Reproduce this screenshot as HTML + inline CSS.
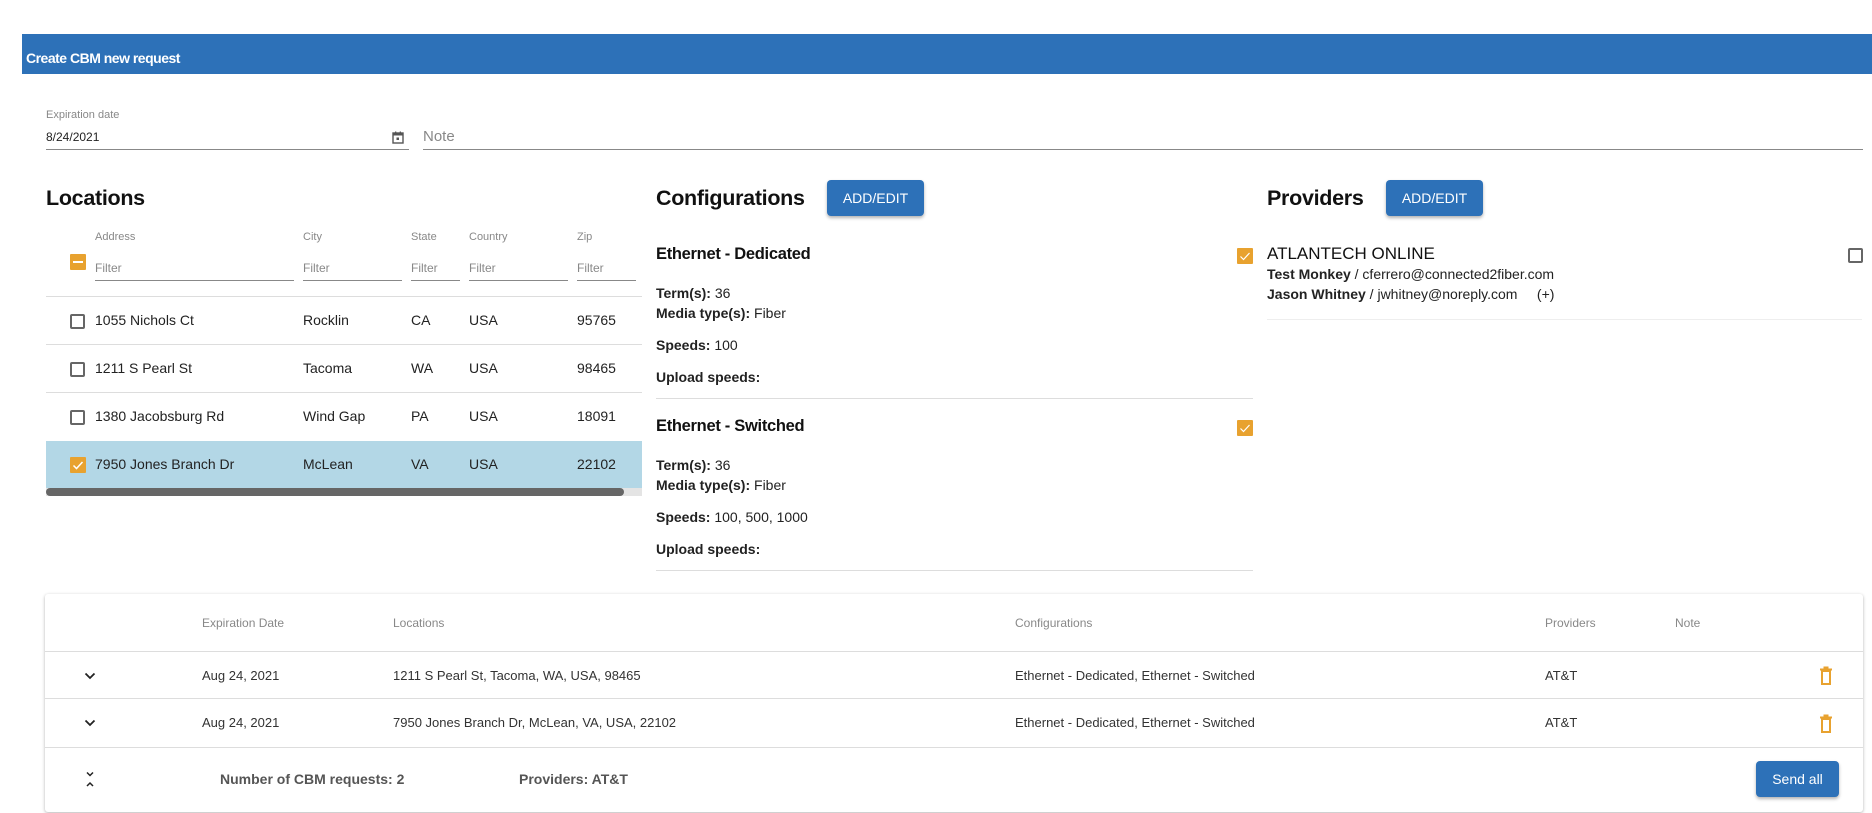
<!DOCTYPE html>
<html><head><meta charset="utf-8"><style>
*{box-sizing:border-box;margin:0;padding:0}
body{width:1872px;height:813px;background:#fff;font-family:"Liberation Sans",Arial,sans-serif;color:#222;position:relative;overflow:hidden}
.a{position:absolute;white-space:nowrap}
.hdr{left:22px;top:34px;width:1850px;height:40px;background:#2d71b8}
.cb{position:absolute;width:15px;height:15px;border:2px solid #666;border-radius:2px;background:#fff}
.cbo{position:absolute;width:16px;height:16px;background:#e8a22f;border-radius:1px}
.btn{position:absolute;background:#2d71b8;color:#fff;border-radius:4px;font-size:14px;display:flex;align-items:center;justify-content:center;box-shadow:0 2px 3px rgba(0,0,0,.3)}
.line{position:absolute;height:1px;background:#ddd}
.ul{position:absolute;height:1px;background:#888}
.gh{font-size:11px;color:#888}
.t14{font-size:14px;color:#222}
.h2{font-size:21.5px;font-weight:bold;color:#111;letter-spacing:-0.3px}
.ch{font-size:16.5px;font-weight:bold;color:#111;letter-spacing:-0.3px}
.ci{font-size:14px;color:#222}
.ci b{font-weight:bold}
.bt{font-size:13px;color:#333}
.bh{font-size:12px;color:#888}
</style></head><body>
<div class="a hdr"></div>
<div class="a" style="left:26px;top:50px;color:#fff;font-size:14px;font-weight:bold;letter-spacing:-0.5px">Create CBM new request</div>

<div class="a gh" style="left:46px;top:109px">Expiration date</div>
<div class="a" style="left:46px;top:130px;font-size:12px;color:#222">8/24/2021</div>
<svg class="a" style="left:392px;top:131px" width="12" height="13" viewBox="0 0 12 13"><rect x="1" y="2" width="10" height="10" fill="none" stroke="#555" stroke-width="1.4"/><rect x="1" y="2" width="10" height="2.5" fill="#555"/><rect x="3" y="0.5" width="1.3" height="2.5" fill="#555"/><rect x="7.7" y="0.5" width="1.3" height="2.5" fill="#555"/><rect x="4.5" y="6.5" width="2.5" height="2.5" fill="#555"/></svg>
<div class="ul" style="left:46px;top:149px;width:363px"></div>
<div class="a" style="left:423px;top:128px;font-size:15px;color:#888">Note</div>
<div class="ul" style="left:423px;top:149px;width:1440px"></div>

<div class="a h2" style="left:46px;top:186px">Locations</div>
<div class="a gh" style="left:95px;top:231px">Address</div>
<div class="a gh" style="left:303px;top:231px">City</div>
<div class="a gh" style="left:411px;top:231px">State</div>
<div class="a gh" style="left:469px;top:231px">Country</div>
<div class="a gh" style="left:577px;top:231px">Zip</div>
<div class="cbo" style="left:70px;top:254px"><div style="position:absolute;left:3px;top:7px;width:10px;height:2px;background:#fff"></div></div>
<div class="a" style="left:95px;top:261px;font-size:12px;color:#888">Filter</div>
<div class="a" style="left:303px;top:261px;font-size:12px;color:#888">Filter</div>
<div class="a" style="left:411px;top:261px;font-size:12px;color:#888">Filter</div>
<div class="a" style="left:469px;top:261px;font-size:12px;color:#888">Filter</div>
<div class="a" style="left:577px;top:261px;font-size:12px;color:#888">Filter</div>
<div class="ul" style="left:95px;top:280px;width:199px"></div>
<div class="ul" style="left:303px;top:280px;width:99px"></div>
<div class="ul" style="left:411px;top:280px;width:49px"></div>
<div class="ul" style="left:469px;top:280px;width:99px"></div>
<div class="ul" style="left:577px;top:280px;width:59px"></div>

<div class="line" style="left:46px;top:296px;width:596px"></div>
<div class="cb" style="left:70px;top:314px"></div>
<div class="a t14" style="left:95px;top:312px">1055 Nichols Ct</div><div class="a t14" style="left:303px;top:312px">Rocklin</div><div class="a t14" style="left:411px;top:312px">CA</div><div class="a t14" style="left:469px;top:312px">USA</div><div class="a t14" style="left:577px;top:312px">95765</div>
<div class="line" style="left:46px;top:344px;width:596px"></div>
<div class="cb" style="left:70px;top:362px"></div>
<div class="a t14" style="left:95px;top:360px">1211 S Pearl St</div><div class="a t14" style="left:303px;top:360px">Tacoma</div><div class="a t14" style="left:411px;top:360px">WA</div><div class="a t14" style="left:469px;top:360px">USA</div><div class="a t14" style="left:577px;top:360px">98465</div>
<div class="line" style="left:46px;top:392px;width:596px"></div>
<div class="cb" style="left:70px;top:410px"></div>
<div class="a t14" style="left:95px;top:408px">1380 Jacobsburg Rd</div><div class="a t14" style="left:303px;top:408px">Wind Gap</div><div class="a t14" style="left:411px;top:408px">PA</div><div class="a t14" style="left:469px;top:408px">USA</div><div class="a t14" style="left:577px;top:408px">18091</div>
<div class="a" style="left:46px;top:441px;width:596px;height:47px;background:#b3d7e6"></div>
<div class="cbo" style="left:70px;top:457px"><svg width="16" height="16"><path d="M3.5 8.5l3 3 6-6.5" fill="none" stroke="#fff" stroke-width="1.5"/></svg></div>
<div class="a t14" style="left:95px;top:456px">7950 Jones Branch Dr</div><div class="a t14" style="left:303px;top:456px">McLean</div><div class="a t14" style="left:411px;top:456px">VA</div><div class="a t14" style="left:469px;top:456px">USA</div><div class="a t14" style="left:577px;top:456px">22102</div>
<div class="a" style="left:46px;top:488px;width:596px;height:8px;background:#e4e4e4"></div>
<div class="a" style="left:46px;top:488px;width:578px;height:8px;background:#666;border-radius:4px"></div>

<div class="a h2" style="left:656px;top:186px">Configurations</div>
<div class="btn" style="left:827px;top:180px;width:97px;height:36px">ADD/EDIT</div>
<div class="a ch" style="left:656px;top:245px">Ethernet - Dedicated</div>
<div class="cbo" style="left:1237px;top:248px"><svg width="16" height="16"><path d="M3.5 8.5l3 3 6-6.5" fill="none" stroke="#fff" stroke-width="1.2"/></svg></div>
<div class="a ci" style="left:656px;top:285px"><b>Term(s):</b> 36</div>
<div class="a ci" style="left:656px;top:305px"><b>Media type(s):</b> Fiber</div>
<div class="a ci" style="left:656px;top:337px"><b>Speeds:</b> 100</div>
<div class="a ci" style="left:656px;top:369px"><b>Upload speeds:</b></div>
<div class="line" style="left:656px;top:398px;width:597px"></div>
<div class="a ch" style="left:656px;top:417px">Ethernet - Switched</div>
<div class="cbo" style="left:1237px;top:420px"><svg width="16" height="16"><path d="M3.5 8.5l3 3 6-6.5" fill="none" stroke="#fff" stroke-width="1.2"/></svg></div>
<div class="a ci" style="left:656px;top:457px"><b>Term(s):</b> 36</div>
<div class="a ci" style="left:656px;top:477px"><b>Media type(s):</b> Fiber</div>
<div class="a ci" style="left:656px;top:509px"><b>Speeds:</b> 100, 500, 1000</div>
<div class="a ci" style="left:656px;top:541px"><b>Upload speeds:</b></div>
<div class="line" style="left:656px;top:570px;width:597px"></div>

<div class="a h2" style="left:1267px;top:186px">Providers</div>
<div class="btn" style="left:1386px;top:180px;width:97px;height:36px">ADD/EDIT</div>
<div class="a" style="left:1267px;top:244px;font-size:17px;color:#111">ATLANTECH ONLINE</div>
<div class="cb" style="left:1848px;top:248px"></div>
<div class="a ci" style="left:1267px;top:266px"><b>Test Monkey</b> / cferrero@connected2fiber.com</div>
<div class="a ci" style="left:1267px;top:286px"><b>Jason Whitney</b> / jwhitney@noreply.com &nbsp;&nbsp;&nbsp; (+)</div>
<div class="line" style="left:1267px;top:319px;width:595px;background:#eee"></div>

<div class="a" style="left:45px;top:594px;width:1818px;height:218px;background:#fff;box-shadow:0 1px 3px rgba(0,0,0,.3);border-radius:3px"></div>
<div class="a bh" style="left:202px;top:616px">Expiration Date</div>
<div class="a bh" style="left:393px;top:616px">Locations</div>
<div class="a bh" style="left:1015px;top:616px">Configurations</div>
<div class="a bh" style="left:1545px;top:616px">Providers</div>
<div class="a bh" style="left:1675px;top:616px">Note</div>
<div class="line" style="left:45px;top:651px;width:1818px"></div>
<svg class="a" style="left:84px;top:672px" width="12" height="8"><path d="M1.5 1.5l4.5 4.5 4.5-4.5" fill="none" stroke="#222" stroke-width="1.8"/></svg>
<div class="a bt" style="left:202px;top:668px">Aug 24, 2021</div>
<div class="a bt" style="left:393px;top:668px">1211 S Pearl St, Tacoma, WA, USA, 98465</div>
<div class="a bt" style="left:1015px;top:668px">Ethernet - Dedicated, Ethernet - Switched</div>
<div class="a bt" style="left:1545px;top:668px">AT&amp;T</div>
<svg class="a" style="left:1819px;top:666px" width="14" height="19" viewBox="0 0 14 19"><rect x="3" y="5" width="8" height="13" fill="none" stroke="#e8a22f" stroke-width="2"/><rect x="1" y="2.5" width="12" height="2" fill="#e8a22f"/><rect x="4.5" y="0.5" width="5" height="2" fill="#e8a22f"/></svg>
<div class="line" style="left:45px;top:698px;width:1818px"></div>
<svg class="a" style="left:84px;top:719px" width="12" height="8"><path d="M1.5 1.5l4.5 4.5 4.5-4.5" fill="none" stroke="#222" stroke-width="1.8"/></svg>
<div class="a bt" style="left:202px;top:715px">Aug 24, 2021</div>
<div class="a bt" style="left:393px;top:715px">7950 Jones Branch Dr, McLean, VA, USA, 22102</div>
<div class="a bt" style="left:1015px;top:715px">Ethernet - Dedicated, Ethernet - Switched</div>
<div class="a bt" style="left:1545px;top:715px">AT&amp;T</div>
<svg class="a" style="left:1819px;top:714px" width="14" height="19" viewBox="0 0 14 19"><rect x="3" y="5" width="8" height="13" fill="none" stroke="#e8a22f" stroke-width="2"/><rect x="1" y="2.5" width="12" height="2" fill="#e8a22f"/><rect x="4.5" y="0.5" width="5" height="2" fill="#e8a22f"/></svg>
<div class="line" style="left:45px;top:747px;width:1818px"></div>
<svg class="a" style="left:85px;top:771px" width="10" height="17"><path d="M2 1.5l3 3 3-3M2 15l3-3 3 3" fill="none" stroke="#222" stroke-width="1.5"/></svg>
<div class="a" style="left:220px;top:771px;font-size:14px;font-weight:bold;color:#555">Number of CBM requests: 2</div>
<div class="a" style="left:519px;top:771px;font-size:14px;font-weight:bold;color:#555">Providers: AT&amp;T</div>
<div class="btn" style="left:1756px;top:761px;width:83px;height:36px;font-size:14px">Send all</div>
</body></html>
